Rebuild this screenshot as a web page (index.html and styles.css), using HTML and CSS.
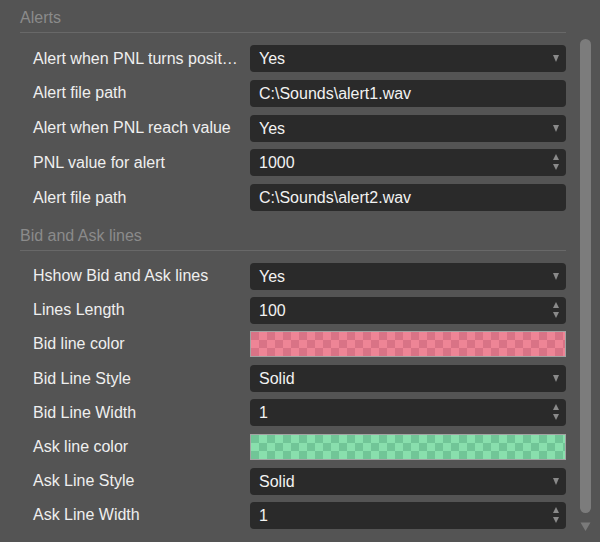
FILE: index.html
```html
<!DOCTYPE html>
<html lang="en">
<head>
<meta charset="utf-8">
<title>Settings</title>
<link rel="stylesheet" href="styles.css">
</head>
<body>
<div class="panel">
  <div class="content">
    <section class="section alerts">
      <h2 class="section-title">Alerts</h2>
      <div class="rows">
        <div class="row"><span class="label">Alert when PNL turns positive</span><div class="field select">Yes</div></div>
        <div class="row"><span class="label">Alert file path</span><div class="field">C:\Sounds\alert1.wav</div></div>
        <div class="row"><span class="label">Alert when PNL reach value</span><div class="field select">Yes</div></div>
        <div class="row"><span class="label">PNL value for alert</span><div class="field spin">1000</div></div>
        <div class="row"><span class="label">Alert file path</span><div class="field">C:\Sounds\alert2.wav</div></div>
      </div>
    </section>
    <section class="section lines">
      <h2 class="section-title">Bid and Ask lines</h2>
      <div class="rows">
        <div class="row"><span class="label">Hshow Bid and Ask lines</span><div class="field select">Yes</div></div>
        <div class="row"><span class="label">Lines Length</span><div class="field spin">100</div></div>
        <div class="row"><span class="label">Bid line color</span><div class="swatch swatch-bid"></div></div>
        <div class="row"><span class="label">Bid Line Style</span><div class="field select">Solid</div></div>
        <div class="row"><span class="label">Bid Line Width</span><div class="field spin">1</div></div>
        <div class="row"><span class="label">Ask line color</span><div class="swatch swatch-ask"></div></div>
        <div class="row"><span class="label">Ask Line Style</span><div class="field select">Solid</div></div>
        <div class="row"><span class="label">Ask Line Width</span><div class="field spin">1</div></div>
      </div>
    </section>
  </div>
  <div class="scrollbar">
    <div class="thumb"></div>
    <svg class="scroll-arrow" width="11" height="9" viewBox="0 0 11 9"><path d="M0.5 0.5 L10.5 0.5 L5.5 9 Z" fill="#7a7a7a"/></svg>
  </div>
</div>
</body>
</html>
```

FILE: styles.css
```css
html, body {
  margin: 0;
  padding: 0;
  background: #545454;
}

body {
  font-family: "Liberation Sans", Arial, sans-serif;
  font-size: 16px;
  color: #eeeeee;
}

.panel {
  display: flex;
  height: 542px;
  overflow: hidden;
}

.content {
  width: 546px;
  padding-left: 20px;
}

.section-title {
  margin: 0;
  padding: 8px 0 4px;
  font-size: 16px;
  font-weight: normal;
  line-height: 20px;
  color: #8b8b8b;
  border-bottom: 1px solid #686868;
}

.lines {
  margin-top: 6.7px;
}

.rows {
  display: flex;
  flex-direction: column;
  margin-top: 12px;
}

.alerts .rows {
  gap: 7.75px;
}

.lines .rows {
  gap: 7.15px;
}

.row {
  display: grid;
  grid-template-columns: 230px 1fr;
  align-items: center;
  height: 27px;
}

.label {
  padding-left: 13px;
  padding-right: 10px;
  white-space: nowrap;
  overflow: hidden;
  text-overflow: ellipsis;
  color: #efefef;
}

.field {
  position: relative;
  height: 27px;
  line-height: 27px;
  padding-left: 9px;
  background: #2a2a2a;
  border-radius: 4px;
  color: #f2f2f2;
}

.select::after {
  content: "";
  position: absolute;
  right: 7px;
  top: 10px;
  border-left: 3.5px solid transparent;
  border-right: 3.5px solid transparent;
  border-top: 7px solid #8a8a8a;
}

.spin::before {
  content: "";
  position: absolute;
  right: 7px;
  top: 5px;
  border-left: 3.5px solid transparent;
  border-right: 3.5px solid transparent;
  border-bottom: 6px solid #8a8a8a;
}

.spin::after {
  content: "";
  position: absolute;
  right: 7px;
  top: 15px;
  border-left: 3.5px solid transparent;
  border-right: 3.5px solid transparent;
  border-top: 6.5px solid #8a8a8a;
}

.swatch {
  box-sizing: border-box;
  height: 26px;
  border: 1px solid #a3a3a3;
  background-size: 16px 16px;
  background-position: 0 0;
}

.swatch-bid {
  background-color: #ee8596;
  background-image: conic-gradient(#ee8596 25%, #d97386 0 50%, #ee8596 0 75%, #d97386 0);
}

.swatch-ask {
  background-color: #89dfad;
  background-image: conic-gradient(#89dfad 25%, #71c597 0 50%, #89dfad 0 75%, #71c597 0);
}

.scrollbar {
  display: flex;
  flex-direction: column;
  align-items: center;
  width: 11px;
  margin-left: 14px;
}

.thumb {
  width: 11px;
  height: 474px;
  margin-top: 39px;
  border-radius: 6px;
  background: #7c7c7c;
}

.scroll-arrow {
  display: block;
  margin-top: 9px;
}
```
